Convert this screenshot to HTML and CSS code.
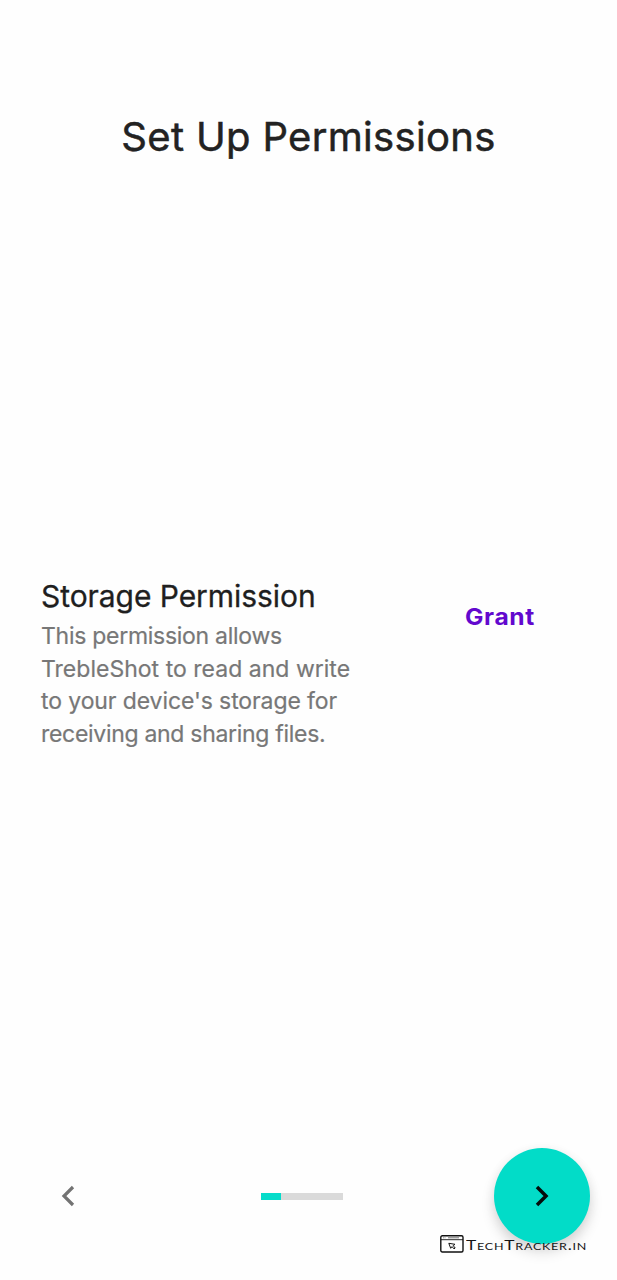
FILE: index.html
```html
<!DOCTYPE html>
<html lang="en">
<head>
<meta charset="utf-8">
<title>Set Up Permissions</title>
<link rel="stylesheet" href="styles.css">
</head>
<body>
<div class="screen">
  <h1 class="title">Set Up Permissions</h1>
  <main class="permission">
    <div class="info">
      <h2 class="name">Storage Permission</h2>
      <p class="description">
        <span class="line line-a">This permission allows</span>
        <span class="line line-b">TrebleShot to read and write</span>
        <span class="line line-c">to your device's storage for</span>
        <span class="line line-d">receiving and sharing files.</span>
      </p>
    </div>
    <button class="grant">Grant</button>
  </main>
  <footer class="nav">
    <button class="back" aria-label="Back">
      <svg width="14" height="22" viewBox="0 0 14 22"><path d="M12 2 3 11l9 9" fill="none" stroke="#737373" stroke-width="3.2"/></svg>
    </button>
    <div class="progress"><div class="progress-value"></div></div>
    <button class="next" aria-label="Next">
      <svg width="14" height="22" viewBox="0 0 14 22"><path d="M2 2l9 9-9 9" fill="none" stroke="#050c0b" stroke-width="3.5"/></svg>
    </button>
  </footer>
  <div class="watermark">
    <svg width="24" height="18" viewBox="0 0 24 18" fill="none" stroke="#111">
      <rect x=".8" y=".8" width="22.2" height="16.2" rx="1.5" stroke-width="1.4"/>
      <path d="M1 4.7h22" stroke-width=".9"/>
      <path d="M3 2.8h3" stroke="#777" stroke-width=".8" stroke-dasharray="1 .5"/>
      <path d="M8 2.8h11" stroke="#777" stroke-width="1"/>
      <path d="M8.8 8.3l6.2 1-1.8 1.3 2 2.4-1.2.9-2-2.3-1.3 1.7z" stroke-width="1"/>
    </svg>
    <span class="brand">TechTracker.in</span>
  </div>
</div>
</body>
</html>
```
FILE: styles.css
```css
* { box-sizing: border-box; }
body { margin: 0; background: #fefefe; font-family: Inter, "Open Sans", sans-serif; }
h1, h2, p { margin: 0; font-weight: 400; }
button { border: 0; padding: 0; background: none; font-family: inherit; }
svg { display: block; }

.screen { position: relative; height: 1280px; display: flex; flex-direction: column; overflow: hidden; }
.title { margin-top: 112px; height: 50px; line-height: 50px; font-size: 40px; letter-spacing: .33px; text-align: center; color: #222; white-space: nowrap; -webkit-text-stroke: .5px #222; }

.permission { margin-top: 414px; padding-left: 41px; height: 180px; display: flex; align-items: flex-start; }
.info { width: 424px; }
.name { height: 44px; line-height: 40px; font-size: 30px; letter-spacing: -.06px; color: #1f1f1f; white-space: nowrap; -webkit-text-stroke: .3px #1f1f1f; }
.description { font-size: 23px; line-height: 32.6px; color: #777; -webkit-text-stroke: .2px #777; }
.line { display: block; white-space: nowrap; }
.line-a { letter-spacing: -.28px; }
.line-b { letter-spacing: .02px; }
.line-c { letter-spacing: -.1px; }
.line-d { letter-spacing: -.3px; }
.grant { margin-top: 26px; line-height: 30px; font-size: 23px; font-weight: 700; letter-spacing: .6px; color: #6208ce; white-space: nowrap; transform: scaleX(1.07); transform-origin: left; }

.nav { margin-top: auto; margin-bottom: 36px; height: 96px; padding: 0 27.5px 0 61px; display: flex; align-items: center; justify-content: space-between; }
.progress { margin-left: 15px; margin-right: -20px; width: 82px; height: 7px; background: #dadada; }
.progress-value { width: 25%; height: 100%; background: #06dcca; }
.next { width: 96px; height: 96px; border-radius: 50%; background: #02dcc8; display: flex; align-items: center; justify-content: center; box-shadow: 0 8px 14px rgba(0,0,0,.14), 0 2px 12px rgba(0,0,0,.06); }

.watermark { position: absolute; left: 440px; top: 1235px; display: flex; gap: 2px; color: #151515; }
.brand { font: 12.5px/22px Lato, sans-serif; font-variant: small-caps; letter-spacing: .55px; white-space: nowrap; transform: scaleX(1.39); transform-origin: left; }
```
